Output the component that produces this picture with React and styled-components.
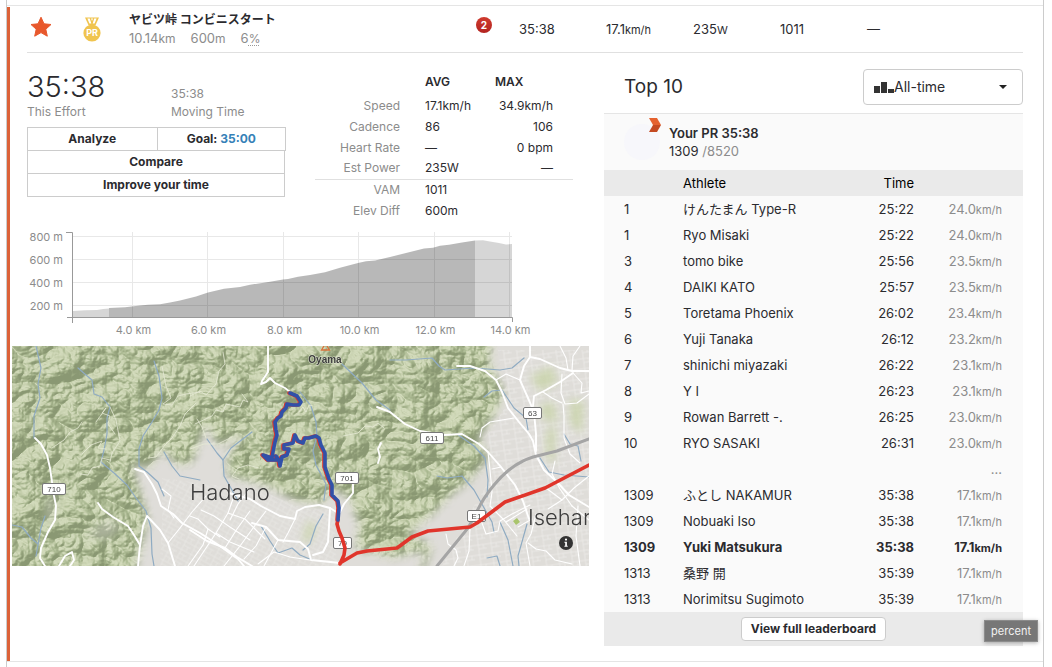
import styled, { createGlobalStyle } from 'styled-components'

const efforts = [
    { rank: '1', name: 'けんたまん Type-R', time: '25:22', speed: '24.0' },
    { rank: '1', name: 'Ryo Misaki', time: '25:22', speed: '24.0' },
    { rank: '3', name: 'tomo bike', time: '25:56', speed: '23.5' },
    { rank: '4', name: 'DAIKI KATO', time: '25:57', speed: '23.5' },
    { rank: '5', name: 'Toretama Phoenix', time: '26:02', speed: '23.4' },
    { rank: '6', name: 'Yuji Tanaka', time: '26:12', speed: '23.2' },
    { rank: '7', name: 'shinichi miyazaki', time: '26:22', speed: '23.1' },
    { rank: '8', name: 'Y I', time: '26:23', speed: '23.1' },
    { rank: '9', name: 'Rowan Barrett -.', time: '26:25', speed: '23.0' },
    { rank: '10', name: 'RYO SASAKI', time: '26:31', speed: '23.0' },
    { gap: true },
    { rank: '1309', name: 'ふとし NAKAMUR', time: '35:38', speed: '17.1' },
    { rank: '1309', name: 'Nobuaki Iso', time: '35:38', speed: '17.1' },
    { rank: '1309', name: 'Yuki Matsukura', time: '35:38', speed: '17.1', own: true },
    { rank: '1313', name: '桑野 開', time: '35:39', speed: '17.1' },
    { rank: '1313', name: 'Norimitsu Sugimoto', time: '35:39', speed: '17.1' },
]

const shields = [
    { x: 30, y: 137, width: 24, label: '710' },
    { x: 323, y: 126, width: 24, label: '701' },
    { x: 321, y: 191, width: 19, label: '79' },
    { x: 408, y: 86, width: 24, label: '611' },
    { x: 511, y: 61, width: 19, label: '63' },
    { x: 455, y: 164, width: 19, label: 'E1' },
]

const majorRoads = [
    'M23 92L29 98L35 109L38 122L40 136L42 150L44 160L43 174L36 186L29 202L28 212L33 220',
    'M86 157L90 163L101 171L116 180L122 189L128 199L126 220',
    'M123 123L132 126L140 138L145 148L149 160L161 168L170 177L188 187L205 198L226 213L232 220',
    'M128 200L131 180L135 170L148 184L156 197L163 220',
    'M256 0V12L256 26L250 35L249 38L254 36L258 32L263 37L273 42L278 46',
    'M365 61L378 66L393 78L408 85L432 89L450 88L467 98L476 106L489 121L503 139L511 155L517 173',
    'M445 20L458 20L473 25L484 34L490 46L496 62L507 76L517 88L521 95L524 109L532 124L545 136L557 149L577 161',
    'M518 0V11L528 13L548 22L560 25L577 25',
    'M518 11L512 20L508 34L516 52L522 66L524 88V105',
    'M521 60L522 50L534 44L548 36L561 27',
    'M341 138V147L332 158L328 166',
    'M369 97L366 103L368 111L366 117',
    'M217 147L238 153L249 160L268 170L283 173L285 165L293 161L307 159L318 162L326 167',
    'M318 162L317 180L316 196L311 206L301 209',
    'M178 184L195 195L213 202L225 211L240 220',
    'M240 177L254 181L266 194L288 196L296 203L299 214L328 217',
    'M47 220L53 210L60 206L62 214L58 220',
]

const minorRoads = [
    'M178 170L186 173L196 183L208 191',
    'M156 197L168 182L180 166L194 150',
    'M162 172L156 164L159 150L150 143',
    'M182 220L204 187L216 167L222 150',
    'M204 187L218 196L242 206',
    'M212 220L228 200L244 178L254 165',
    'M216 167L233 173L253 193',
    'M196 183L191 199L176 220',
    'M213 202L225 183L238 165',
    'M189 164L202 170L218 181L238 194',
    'M254 181L244 200L232 213',
    'M266 194L258 209L252 220',
    'M283 173L276 187L271 196',
    'M236 145L226 158L218 174',
    'M246 218L262 206L278 211L298 214',
    'M468 91L470 82L478 76L490 74L502 72',
    'M476 106L478 124L480 146L478 160L492 174L505 190',
    'M489 121L480 123',
    'M434 188L436 198L444 204L446 212L442 220',
    'M458 182L457 205L452 220',
    'M470 177L474 188L486 185L488 175L500 168L518 159',
    'M516 197L524 203L534 205L543 214L560 218',
    'M524 168L519 188L514 197L518 220',
    'M506 181L520 173M494 176L515 163',
    'M550 28L549 47L553 58L565 57L577 48',
    'M551 58L552 70L552 92L558 108L568 117',
    'M531 46L540 52L550 57',
    'M561 27L570 37L569 47L577 45',
    'M534 142L550 154L562 142L577 130',
    'M543 115L540 128L548 143L560 160',
    'M560 160L577 174M550 154L536 163',
    'M568 0L561 10L560 25M548 0L554 12L556 24',
    'M508 34L494 28L484 34',
    'M566 160L564 190L568 220',
]

const trails = [
    'M40 102L52 94L58 86L66 82L70 76',
    'M103 88L96 78L98 70L90 67L94 62L84 76',
    'M94 103L86 102L90 95L79 99L70 108',
    'M98 114L90 112L88 120L80 122L76 129L68 128',
    'M98 61L104 74L108 95L100 107L98 116',
    'M150 20L154 40L159 52L151 58L160 59L166 50L174 48L188 46',
    'M136 112L144 111L153 99L160 92L168 80L173 68L184 57',
    'M178 103L192 98L206 98L220 91',
    'M183 78L200 70L204 64L211 66L214 58L228 61L231 54L236 56L230 48',
    'M178 50L188 45L194 49L204 38L207 25L213 18L211 6',
    'M287 66L291 61L294 66L297 59L301 60',
    'M227 133L220 130L226 122L236 119L247 122',
    'M331 90L346 87L353 80L361 81L366 77L372 82',
    'M185 73L190 81L194 92',
]

const rivers = [
    'M24 0L29 22L26 38L28 52L22 70L22 92',
    'M66 22L74 29L80 34L82 48L90 51L98 61L95 72L95 88L92 104L89 116L102 127L115 139L124 152L134 165L139 182L140 208L142 220',
    'M142 15L147 30L150 52L147 64L140 76L131 90L127 103V120L135 126L146 136L152 150',
    'M152 106L160 120L168 130L188 134',
    'M0 179L10 181L19 192L26 198',
    'M33 170L29 182L24 210',
    'M195 93L205 107L211 114L219 102L240 86',
    'M211 114L212 130L220 144L226 155',
    'M288 46L299 60L304 76L305 90L301 105L304 119L314 138L312 154',
    'M311 168L304 180L298 198L291 204',
    'M249 180L258 195L266 207L280 202L288 209L300 214',
    'M330 18L350 37L364 54L378 64',
    'M378 14L394 14L420 12L427 20L433 24L462 22L488 24L500 22L512 12',
    'M445 88L462 100L473 112L476 134L475 151',
    'M425 130L435 132L450 130L462 144L471 160L480 176L482 186',
    'M488 176L496 194L501 220M515 178L506 210L507 220',
    'M472 51L480 45L490 44L502 62L514 72L516 84',
    'M528 112L537 126L552 129L577 131',
    'M552 88L558 98L566 100L569 115',
    'M475 212L485 210L488 220',
]

export default function App() {
    return (
        <>
            <GlobalStyle />
            <Frame>
                <Entry>
                    <SegmentHeader>
                        <StarCell>
                            <StarIcon />
                        </StarCell>
                        <MedalCell>
                            <MedalIcon />
                        </MedalCell>
                        <SegmentName>
                            <h1>ヤビツ峠 コンビニスタート</h1>
                            <SegmentFacts>
                                <li>
                                    10.14<Unit>km</Unit>
                                </li>
                                <li>
                                    600<Unit>m</Unit>
                                </li>
                                <li>
                                    6<Percent>%</Percent>
                                </li>
                            </SegmentFacts>
                        </SegmentName>
                        <Achievement>2</Achievement>
                        <HeaderStat>35:38</HeaderStat>
                        <HeaderStat>
                            17.1<Unit>km/h</Unit>
                        </HeaderStat>
                        <HeaderStat>
                            235<Unit>W</Unit>
                        </HeaderStat>
                        <HeaderStat>1011</HeaderStat>
                        <LastStat>—</LastStat>
                    </SegmentHeader>

                    <Columns>
                        <div>
                            <Summary>
                                <EffortBlock>
                                    <Times>
                                        <Time>
                                            <EffortTime>35:38</EffortTime>
                                            <span>This Effort</span>
                                        </Time>
                                        <Time>
                                            <span>35:38</span>
                                            <span>Moving Time</span>
                                        </Time>
                                    </Times>
                                    <ActionRow>
                                        <ActionButton>Analyze</ActionButton>
                                        <ActionButton>
                                            Goal: <GoalTime>35:00</GoalTime>
                                        </ActionButton>
                                    </ActionRow>
                                    <ActionStack>
                                        <ActionButton>Compare</ActionButton>
                                        <ActionButton>Improve your time</ActionButton>
                                    </ActionStack>
                                </EffortBlock>
                                <EffortStats />
                            </Summary>
                            <ElevationChart />
                            <MapPanel>
                                <RouteMap />
                                <InfoButton aria-label="Map information">
                                    <svg viewBox="0 0 14 14" width="14" height="14">
                                        <circle cx="7" cy="7" r="7" fill="#333" />
                                        <circle cx="7" cy="3.6" r="1.1" fill="#fff" />
                                        <path d="M5.4 5.8h2.5v4h.8v1H5.4v-1h.8v-3h-.8z" fill="#fff" />
                                    </svg>
                                </InfoButton>
                            </MapPanel>
                        </div>
                        <Leaderboard />
                    </Columns>
                    <Tooltip role="tooltip">percent</Tooltip>
                </Entry>
            </Frame>
        </>
    )
}

function EffortStats() {
    return (
        <StatsTable>
            <thead>
                <tr>
                    <td></td>
                    <th scope="col">AVG</th>
                    <th scope="col">MAX</th>
                </tr>
            </thead>
            <tbody>
                <tr>
                    <th scope="row">Speed</th>
                    <td>
                        17.1<Unit>km/h</Unit>
                    </td>
                    <td>
                        34.9<Unit>km/h</Unit>
                    </td>
                </tr>
                <tr>
                    <th scope="row">Cadence</th>
                    <td>86</td>
                    <td>106</td>
                </tr>
                <tr>
                    <th scope="row">Heart Rate</th>
                    <td>—</td>
                    <td>
                        0 <Unit>bpm</Unit>
                    </td>
                </tr>
                <tr>
                    <th scope="row">Est Power</th>
                    <td>
                        235<Unit>W</Unit>
                    </td>
                    <td>—</td>
                </tr>
            </tbody>
            <tbody>
                <tr>
                    <th scope="row">VAM</th>
                    <td>1011</td>
                    <td></td>
                </tr>
                <tr>
                    <th scope="row">Elev Diff</th>
                    <td>
                        600<Unit>m</Unit>
                    </td>
                    <td></td>
                </tr>
            </tbody>
        </StatsTable>
    )
}

function ElevationChart() {
    const columns = [4, 6, 8, 10, 12, 14]
    const rows = [800, 600, 400, 200]
    const kmToX = (km) => Math.round(120 + (km - 4) * 37.7) + 0.5
    const metersToY = (m) => 9.5 + (800 - m) * 0.115

    return (
        <ChartSvg viewBox="0 0 577 119" role="img" aria-label="Elevation profile">
            {rows.map((m) => (
                <path key={m} d={`M61 ${metersToY(m)}H500`} stroke="#e8e8e8" />
            ))}
            {columns.map((km) => (
                <path key={km} d={`M${kmToX(km)} 5V90`} stroke="#e8e8e8" />
            ))}
            <path
                d="M61 84L73 83.3L85 83L91 82L97 81.5V90H61ZM463 13.5L471 13.3L478 14.5L487 16L494 17.5L500 17V90H463Z"
                fill="#000"
                fillOpacity="0.16"
            />
            <path
                d="M97 81L113 80.2L128 78.5L136 77.8L148 77.3L158 75.6L168 73.5L184 69.5L196 65.5L212 61.7L228 60L238 57.8L258 54.7L271 52.5L276 52L286 49.8L298 48L313 45.2L328 40.8L346 36L354 34.3L363 33.6L378 30L398 25L412 21.5L421 20.7L428 18.7L437 17.7L450 15.5L463 13.5V90H97Z"
                fill="#000"
                fillOpacity="0.28"
            />
            <path d="M54 5.5H60.5V96M55 90.5H500.5V95" fill="none" stroke="#999" />
            {rows.map((m) => (
                <text key={m} x="51" y={metersToY(m) + 4} textAnchor="end">
                    {m} m
                </text>
            ))}
            {columns.map((km) => (
                <text key={km} x={kmToX(km) + 1} y="107" textAnchor="middle">
                    {km}.0 km
                </text>
            ))}
        </ChartSvg>
    )
}

function RouteMap() {
    const blueRoute =
        'M278 47L285 50L289 56L287 59L281 59L275 58L274 62L270 66L269 70L266 72L263 76L264 84L265 89L263 96L261 106L260 112L251 109L256 114L265 114L264 110L267 114L268 120L270 111L275 109L277 103L272 103L272 99L281 97L283 89L286 95L291 97L293 92L297 92L304 90L307 92L309 99L313 107L313 121L317 133L320 139L320 149L326 155L327 162L326 174'

    return (
        <MapSvg viewBox="0 0 577 220" preserveAspectRatio="xMidYMid slice" role="img" aria-label="Route map">
            <defs>
                <filter id="hills" x="0" y="0" width="1" height="1" colorInterpolationFilters="sRGB">
                    <feTurbulence type="turbulence" baseFrequency="0.021 0.026" numOctaves="5" seed="23" />
                    <feDiffuseLighting surfaceScale="17" lightingColor="#fff">
                        <feDistantLight azimuth="225" elevation="50" />
                    </feDiffuseLighting>
                    <feComponentTransfer>
                        <feFuncR type="table" tableValues="0.48 0.54 0.6 0.67 0.76 0.85" />
                        <feFuncG type="table" tableValues="0.54 0.6 0.66 0.73 0.8 0.88" />
                        <feFuncB type="table" tableValues="0.4 0.45 0.51 0.58 0.67 0.77" />
                    </feComponentTransfer>
                </filter>
                <filter id="soften">
                    <feGaussianBlur stdDeviation="4" />
                </filter>
                <pattern id="streets" width="11" height="9" patternUnits="userSpaceOnUse" patternTransform="rotate(28)">
                    <path d="M0 1H11M3 0V9M3 5H11M8 5V9" stroke="#e9e8e5" strokeWidth="0.7" />
                </pattern>
                <pattern id="blocks" width="13" height="10" patternUnits="userSpaceOnUse" patternTransform="rotate(-8)">
                    <path d="M0 2H13M5 0V10M5 6H13M10 2V6" stroke="#ecebe8" strokeWidth="0.8" />
                </pattern>
            </defs>

            <rect width="577" height="220" filter="url(#hills)" />
            <rect width="577" height="220" fill="#c3cfa6" opacity="0.22" />

            <g filter="url(#soften)" fill="#dfddd9">
                <path d="M120 118L138 122L150 103L166 120L180 117L194 78L206 100L232 88L215 110L216 130L256 140L285 155L310 158L320 143L336 150L347 178L344 202L380 212L412 204L408 230H122L136 172Z" />
                <path d="M480 -8L478 18L492 46L486 64L466 92L476 112L458 134L440 148L424 165L396 188L420 200L410 230H590V-8Z" />
                <path d="M72 190L98 170L110 182L94 194Z" opacity="0.4" />
                <path d="M34 150L44 150L42 176L34 176Z" opacity="0.4" />
            </g>
            <path d="M150 132L196 138L250 145L285 160L322 165L325 220H148L150 170Z" fill="url(#streets)" />
            <path d="M486 4H577V220H430L456 170L480 130L476 88L494 60Z" fill="url(#blocks)" />
            <g filter="url(#soften)" fill="#c8d3a8" opacity="0.8">
                <path d="M518 30L540 20L546 36L528 46Z" />
                <path d="M558 52L572 56L570 88L558 78Z" />
                <path d="M534 84L544 80L542 118L534 112Z" />
                <path d="M528 58L542 56L546 76L530 74Z" />
                <path d="M296 174L304 180L298 196L290 196Z" />
            </g>
            <path d="M501 175L505 172L508 176L504 179Z" fill="#a9c46c" />

            <g fill="none" strokeLinejoin="round" strokeLinecap="round">
                <g stroke="#8fabc2" strokeWidth="1.2">
                    {rivers.map((d) => (
                        <path key={d} d={d} />
                    ))}
                </g>
                <g stroke="#e6ead6" strokeWidth="0.8">
                    {trails.map((d) => (
                        <path key={d} d={d} />
                    ))}
                </g>
                <g stroke="#fff" strokeWidth="1.1">
                    {minorRoads.map((d) => (
                        <path key={d} d={d} />
                    ))}
                </g>
                <g stroke="#fff" strokeWidth="1.9">
                    {majorRoads.map((d) => (
                        <path key={d} d={d} />
                    ))}
                </g>
                <path
                    d="M425 220L456 182C468 162 466 158 482 139C495 123 508 115 521 111L545 105L577 93"
                    stroke="#a5a5a5"
                    strokeWidth="3"
                />
            </g>

            {shields.map((shield) => (
                <g key={shield.label}>
                    <rect
                        x={shield.x + 0.5}
                        y={shield.y + 0.5}
                        width={shield.width - 1}
                        height="11"
                        rx="1.5"
                        fill="#fff"
                        stroke="#777"
                    />
                    <ShieldText x={shield.x + shield.width / 2} y={shield.y + 9}>
                        {shield.label}
                    </ShieldText>
                </g>
            ))}

            <path d="M309.5 4H317.5L313.5 -2.5Z" fill="none" stroke="#d8713a" strokeWidth="1.3" />
            <PeakText x="313" y="17">
                Oyama
            </PeakText>
            <CityText x="178" y="154">
                Hadano
            </CityText>
            <CityText x="516" y="179">
                Isehar
            </CityText>

            <g fill="none" strokeLinejoin="round" strokeLinecap="round" strokeWidth="3.6">
                <path d={blueRoute} stroke="#e0352b" transform="translate(-1 0)" />
                <path
                    d="M326 174L325 178L327 185L330 192L333 202L332 209L328 218M328 217L345 207L355 205L385 202L400 191L416 185L458 181L465 177L493 156L533 142L577 119"
                    stroke="#e0352b"
                />
                <path d={blueRoute} stroke="#3151a8" />
            </g>
        </MapSvg>
    )
}

function Leaderboard() {
    return (
        <section>
            <BoardHeader>
                <h2>Top 10</h2>
                <PeriodField>
                    <svg viewBox="0 0 20 11" width="20" height="11">
                        <path d="M0 4H6V11H0ZM7 0H13V11H7ZM14 7H20V11H14Z" fill="#333" />
                    </svg>
                    <select aria-label="Leaderboard period" defaultValue="all">
                        <option value="all">All-time</option>
                    </select>
                    <svg viewBox="0 0 8 4" width="8" height="4">
                        <path d="M0 0H8L4 4Z" fill="#222" />
                    </svg>
                </PeriodField>
            </BoardHeader>
            <PersonalRecord>
                <Avatar>
                    <AvatarFlag viewBox="0 0 12 14" width="12" height="14">
                        <path d="M0 0H8L12 7H4Z" fill="#e5622f" />
                        <path d="M4 7H12L8 14H0Z" fill="#c44a22" />
                    </AvatarFlag>
                </Avatar>
                <div>
                    <strong>Your PR 35:38</strong>
                    <p>
                        1309 <Muted>/8520</Muted>
                    </p>
                </div>
            </PersonalRecord>
            <BoardTable>
                <thead>
                    <tr>
                        <RankCell as="th"></RankCell>
                        <NameCell as="th">Athlete</NameCell>
                        <TimeCell as="th">Time</TimeCell>
                        <SpeedCell as="th"></SpeedCell>
                    </tr>
                </thead>
                <tbody>
                    {efforts.map((effort, index) => (
                        <BoardRow key={index} $own={effort.own}>
                            <RankCell>{effort.rank}</RankCell>
                            <NameCell>{effort.name}</NameCell>
                            <TimeCell>{effort.time}</TimeCell>
                            <SpeedCell $own={effort.own}>
                                {effort.gap ? '...' : effort.speed}
                                {!effort.gap && <Unit>km/h</Unit>}
                            </SpeedCell>
                        </BoardRow>
                    ))}
                </tbody>
            </BoardTable>
            <BoardFooter>
                <FullBoardButton>View full leaderboard</FullBoardButton>
            </BoardFooter>
        </section>
    )
}

function StarIcon() {
    return (
        <svg viewBox="0 0 22 22" width="22" height="22">
            <path
                d="M11 1.2L14 7.8L21 8.5L15.8 13.2L17.3 20.2L11 16.6L4.7 20.2L6.2 13.2L1 8.5L8 7.8Z"
                fill="#e8582c"
                stroke="#e8582c"
                strokeLinejoin="round"
            />
        </svg>
    )
}

function MedalIcon() {
    return (
        <svg viewBox="0 0 18 25" width="18" height="25">
            <path d="M2 0.5H16L12.6 8H5.4Z" fill="#f0c44f" />
            <path d="M4.4 1.5H6.8L8.3 6.5H6.4ZM13.6 1.5H11.2L9.7 6.5H11.6ZM8 1.5H10L9 4Z" fill="#fff" />
            <circle cx="9" cy="16" r="8.6" fill="#f0c44f" />
            <MedalText x="9" y="19">
                PR
            </MedalText>
        </svg>
    )
}

const GlobalStyle = createGlobalStyle`
    * {
        box-sizing: border-box;
    }

    body {
        margin: 0;
        background-color: #fff;
        color: #2b2b2f;
        font-family: Inter, 'Noto Sans CJK JP', sans-serif;
        font-size: 13px;
        line-height: 18px;
    }

    h1, h2, p, ul {
        margin: 0;
        padding: 0;
    }

    button, select {
        font: inherit;
        color: inherit;
    }

    svg {
        display: block;
    }
`

const Frame = styled.main`
    min-height: 100vh;
    margin: 0 8px 0 6px;
    padding-top: 5px;
    border-left: 1px solid #ccc;
    border-right: 1px solid #ccc;
`

const Entry = styled.article`
    position: relative;
    padding: 0 20px 15px 0;
    border-top: 1px solid #e5e5e5;
    border-bottom: 1px solid #e5e5e5;

    &::before {
        content: '';
        position: absolute;
        inset: 1px auto 0 0;
        width: 3px;
        background-color: #dc6238;
    }
`

const SegmentHeader = styled.header`
    display: flex;
    align-items: center;
    height: 47px;
    margin-left: 20px;
    border-bottom: 1px solid #e0e0e0;
`

const StarCell = styled.div`
    width: 56px;
    padding: 0 3px 4px;
`

const MedalCell = styled.div`
    width: 46px;
`

const SegmentName = styled.div`
    flex: 1;

    h1 {
        font-size: 12px;
        line-height: 18px;
        font-weight: 700;
    }
`

const SegmentFacts = styled.ul`
    display: flex;
    gap: 15px;
    list-style: none;
    color: #8c8c8c;
`

const Unit = styled.span`
    font-size: 12px;
`

const Percent = styled(Unit)`
    text-decoration: underline dotted #999 1px;
    text-underline-offset: 2px;
`

const Achievement = styled.span`
    width: 16px;
    height: 16px;
    margin: 0 27px 9px 0;
    border-radius: 50%;
    background-image: linear-gradient(#cf3a2e, #b32420);
    color: #fff;
    font-size: 10px;
    font-weight: 700;
    line-height: 16px;
    text-align: center;
`

const HeaderStat = styled.span`
    width: 87px;

    ${Unit} {
        font-size: 11px;
    }
`

const LastStat = styled(HeaderStat)`
    width: 156px;
`

const Columns = styled.div`
    display: grid;
    grid-template-columns: 577fr 419fr;
    gap: 15px;
    margin-left: 5px;
`

const Summary = styled.div`
    display: flex;
    justify-content: space-between;
    padding: 18px 16px 0 15px;
`

const EffortBlock = styled.div`
    width: 259px;
`

const Times = styled.div`
    display: grid;
    grid-template-columns: 144px 1fr;
    align-items: end;
    margin-bottom: 6px;
    color: #8c8c8c;
    font-size: 12px;
`

const Time = styled.div`
    display: flex;
    flex-direction: column;
`

const EffortTime = styled.span`
    color: #2b2b2f;
    font-size: 29px;
    font-weight: 300;
    line-height: 32px;
`

const ActionRow = styled.div`
    display: grid;
    grid-template-columns: 1fr 1fr;
    border: 1px solid #ccc;

    button + button {
        border-left: 1px solid #ccc;
    }
`

const ActionStack = styled.div`
    display: grid;
    margin-right: 1px;
    border: solid #ccc;
    border-width: 0 1px 1px;

    button + button {
        border-top: 1px solid #ccc;
    }
`

const ActionButton = styled.button`
    padding: 2px 0;
    border: none;
    background-color: #fff;
    font-size: 12px;
    font-weight: 700;
`

const GoalTime = styled.span`
    color: #3581b8;
`

const StatsTable = styled.table`
    width: 258px;
    border-collapse: collapse;
    table-layout: fixed;

    tr {
        height: 21px;
    }

    thead tr {
        height: 24px;
    }

    tbody + tbody {
        border-top: 1px solid #e0e0e0;
    }

    th,
    td {
        padding: 0;
        text-align: left;
        white-space: nowrap;
    }

    thead th {
        padding-bottom: 3px;
        font-size: 12px;
        font-weight: 600;
    }

    tbody th {
        padding-right: 25px;
        color: #8c8c8c;
        font-size: 12px;
        font-weight: 400;
        text-align: right;
    }

    tbody td {
        font-size: 12px;
    }

    thead td {
        width: 110px;
    }

    thead th:nth-child(2) {
        width: 70px;
    }

    tbody td:last-child {
        padding-right: 20px;
        text-align: right;
    }
`

const ChartSvg = styled.svg`
    width: 100%;
    height: auto;
    margin-top: 6px;

    text {
        fill: #8c8c8c;
        font-size: 11px;
    }
`

const MapPanel = styled.div`
    position: relative;
`

const MapSvg = styled.svg`
    width: 100%;
    height: 220px;
    overflow: hidden;
`

const ShieldText = styled.text`
    fill: #444;
    font-family: 'Liberation Sans', Arial, sans-serif;
    font-size: 8px;
    text-anchor: middle;
`

const PeakText = styled.text`
    fill: #3d3d3d;
    stroke: #dfe5d0;
    stroke-width: 1px;
    paint-order: stroke;
    font-family: 'Liberation Sans', Arial, sans-serif;
    font-size: 10px;
    font-weight: 700;
    text-anchor: middle;
`

const CityText = styled.text`
    fill: #3d3d3d;
    font-size: 22px;
    font-weight: 300;
`

const MedalText = styled.text`
    fill: #fff;
    font-size: 9px;
    font-weight: 700;
    text-anchor: middle;
`

const InfoButton = styled.button`
    position: absolute;
    right: 16px;
    bottom: 16px;
    padding: 0;
    border: none;
    background: none;
`

const BoardHeader = styled.div`
    display: flex;
    align-items: center;
    justify-content: space-between;
    padding: 16px 0 8px 20px;

    h2 {
        font-size: 19px;
        font-weight: 400;
    }
`

const PeriodField = styled.div`
    display: flex;
    align-items: center;
    width: 160px;
    height: 36px;
    padding: 0 15px 0 10px;
    border: 1px solid #ccc;
    border-radius: 4px;

    select {
        flex: 1;
        padding: 0;
        border: none;
        appearance: none;
        background: none;
        font-size: 14px;
    }
`

const PersonalRecord = styled.div`
    display: flex;
    align-items: center;
    gap: 9px;
    height: 57px;
    padding: 0 20px;
    border-top: 1px solid #e5e5e5;
    background-color: #fafafa;

    strong {
        font-weight: 600;
    }
`

const Avatar = styled.div`
    position: relative;
    width: 36px;
    height: 36px;
    border-radius: 50%;
    background-color: #f7f7fb;
`

const AvatarFlag = styled.svg`
    position: absolute;
    top: -6px;
    right: -1px;
`

const Muted = styled.span`
    color: #8c8c8c;
`

const BoardTable = styled.table`
    width: 100%;
    border-collapse: collapse;
    background-color: #fafafa;

    ${Unit} {
        font-size: 11px;
    }

    thead tr {
        height: 26px;
        background-color: #eaeaea;
        color: #000;
    }

    th {
        font-weight: 400;
    }
`

const BoardRow = styled.tr`
    height: 26px;
    font-weight: ${({ $own }) => ($own ? 700 : 400)};
`

const RankCell = styled.td`
    width: 79px;
    padding: 0 0 0 20px;
`

const NameCell = styled.td`
    padding: 0;
    text-align: left;
`

const TimeCell = styled.td`
    width: 80px;
    padding: 0;
    text-align: right;
`

const SpeedCell = styled.td`
    width: 109px;
    padding: 0 21px 0 0;
    color: ${({ $own }) => ($own ? 'inherit' : '#8c8c8c')};
    text-align: right;
`

const BoardFooter = styled.div`
    display: flex;
    justify-content: center;
    padding: 5px 0;
    background-color: #eaeaea;
`

const FullBoardButton = styled.button`
    padding: 2px 9px;
    border: 1px solid #ccc;
    border-radius: 4px;
    background-color: #fff;
    font-size: 12px;
    line-height: 18px;
    font-weight: 700;
`

const Tooltip = styled.div`
    position: absolute;
    right: 5px;
    bottom: 19px;
    padding: 1px 6px;
    border: 1px solid #8c8c8c;
    background-color: #777;
    box-shadow: 0 1px 4px rgba(0, 0, 0, 0.3);
    color: #f2f2f2;
    font-size: 11px;
`
